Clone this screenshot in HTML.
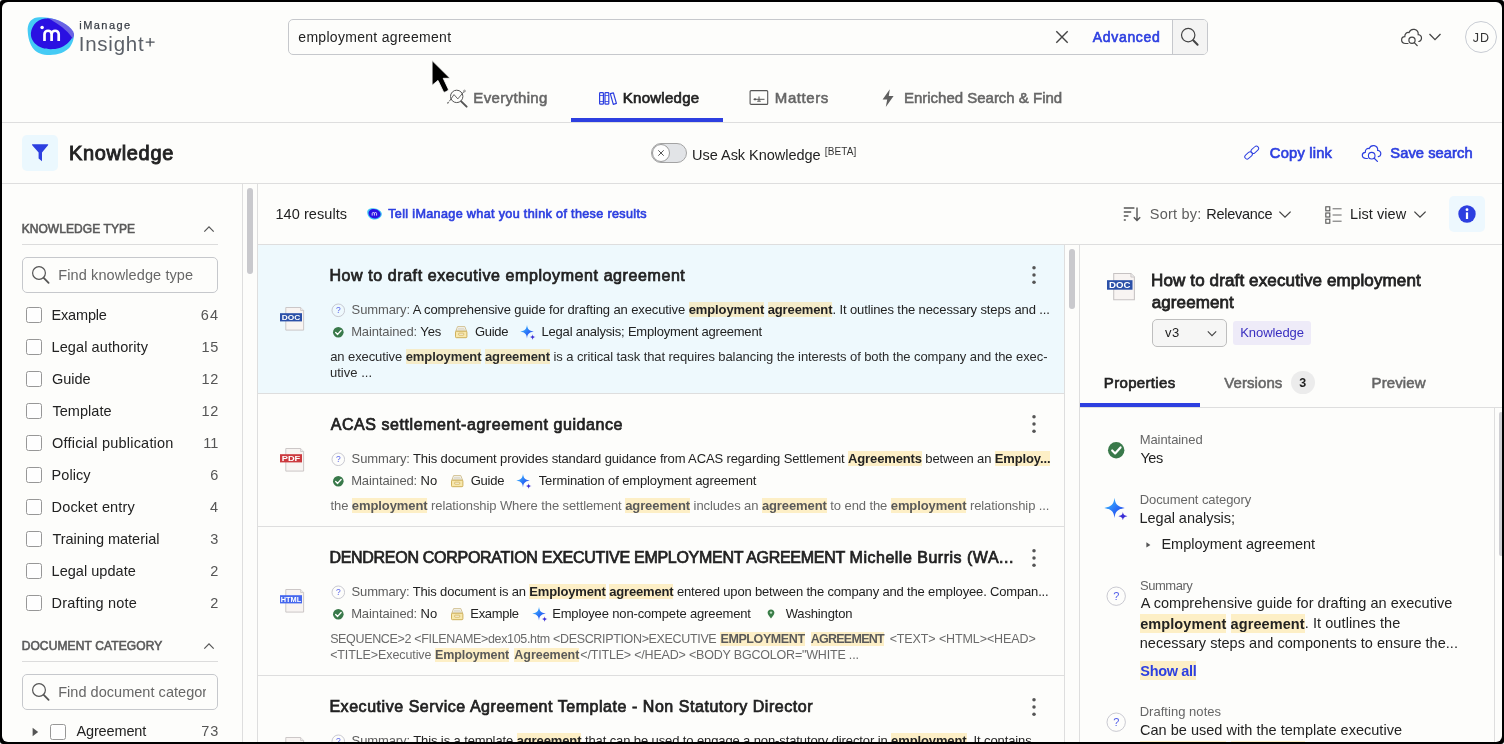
<!DOCTYPE html>
<html><head><meta charset="utf-8"><title>iManage Insight+</title>
<style>
html,body{margin:0;padding:0;background:#fff;}
#fr{position:absolute;left:0;top:0;width:1504px;height:744px;background:#000;border-radius:3px;}
body{width:1504px;height:744px;overflow:hidden;font-family:"Liberation Sans",sans-serif;}
#app{position:absolute;left:2px;top:2px;width:1500.3px;height:739.8px;background:#fdfdfb;border-radius:6px;overflow:hidden;}
#c{position:absolute;left:-2px;top:-2px;width:1504px;height:744px;will-change:transform;}
#c>div,#c>svg{position:absolute;box-sizing:border-box;}
.t{white-space:nowrap;}
.t b{font-weight:bold;}
.h{background:#fdefc6;}
.h2{background:#f5ecc9;}
.h3{background:#fdefc6;padding:1.5px 0;}
.g{color:#5d5d5d;}
.gl b{color:#595959;}
.d{color:#222;}
</style></head><body><div id="fr"></div><div id="app"><div id="c">
<svg style="left:26px;top:14px;" width="52" height="44" viewBox="26 14 52 44">
<path d="M27.7 31 C27.3 25 30 18.6 37 17.6 C41 17.1 46 17.4 50 18 C60 20 71 26 73.6 33.5 C74.6 37.5 73 42.5 70 47 C66 52 58 55 50 55 C42 55 37 53 34 49.5 C30 45 28 38 27.7 31Z" fill="#45cbf5"/>
<path d="M47 18.3 C55 17.6 69 24 73.2 31.5 C74.8 34.5 74 36.8 72.2 39 L47 20Z" fill="#6a62e4"/>
<path d="M31 36 C30 28 36 19.6 45 18.6 C48 18.3 49.5 18.8 51 19.8 C58 24 67 30 72 37.4 C70 42 65 46 59.5 48 C54 49.6 47 49.6 42.5 48 C36 45.6 32 41.5 31 36Z" fill="#2a10e2"/>
<circle cx="42.1" cy="27.4" r="1.75" fill="#fff"/>
<path d="M44.5 40.9 V34.3 a3.55 3.55 0 0 1 7.1 0 V40.9 M51.6 34.3 a3.55 3.55 0 0 1 7.1 0 V40.9" fill="none" stroke="#fff" stroke-width="2.7"/>
</svg>
<div class="t" style="left:79.28px;top:18px;font-size:11px;line-height:15px;letter-spacing:1.445px;color:#3a3f47;-webkit-text-stroke:0.25px #3a3f47;">iManage</div>
<div class="t" style="left:78.75px;top:29px;font-size:20.5px;line-height:29px;letter-spacing:0.750px;color:#5b6068;">Insight</div>
<svg style="left:144px;top:36px;" width="12" height="12" viewBox="0 0 12 12"><path d="M6.1 1.9 V10.4 M1.7 6.2 H10.6" stroke="#4b5058" stroke-width="1.3" fill="none"/></svg>
<div style="left:288px;top:19px;width:920px;height:36px;border:1px solid #c6c8cc;border-radius:5px;background:#fdfdfb;"></div>
<div style="left:1172px;top:20px;width:35px;height:34px;background:#f4f4f3;border-left:1px solid #c6c8cc;border-radius:0 4px 4px 0;"></div>
<div class="t" style="left:298.34px;top:27px;font-size:14px;line-height:20px;letter-spacing:0.296px;color:#222;">employment agreement</div>
<svg style="left:1054px;top:29px;" width="16" height="16" viewBox="0 0 16 16"><path d="M2.3 2.3 L13.7 13.7 M13.7 2.3 L2.3 13.7" stroke="#444" stroke-width="1.4" fill="none"/></svg>
<div class="t" style="left:1092.70px;top:27px;font-size:14px;line-height:20px;letter-spacing:0.698px;color:#2d3fe0;-webkit-text-stroke:0.63px #2d3fe0;">Advanced</div>
<svg style="left:1179px;top:27px;" width="22" height="22" viewBox="0 0 22 22"><circle cx="9.2" cy="8.1" r="6.7" fill="none" stroke="#444" stroke-width="1.2"/><path d="M14.2 13.2 L18.6 17.8" stroke="#444" stroke-width="2" stroke-linecap="round"/></svg>
<svg style="left:1398.8px;top:26.3px;" width="26" height="24" viewBox="0 0 26 24"><path d="M9 17.5 H6.6 C4 17.5 2.6 15.8 2.6 14 C2.6 12.2 4 10.8 5.8 10.7 C5.6 7.5 8 6 10 6.6 C11 4 13.3 3 15.4 3.4 C18 3.9 19.4 6 19.2 8.6 C21.6 8.7 22.6 10.6 22.5 12.3 C22.4 14 21.3 15.3 19.8 15.5" fill="none" stroke="#444" stroke-width="1.2" stroke-linecap="round"/>
<circle cx="13" cy="14.2" r="3.1" fill="none" stroke="#444" stroke-width="1.2"/><path d="M15.3 16.6 L18.2 19.6" stroke="#444" stroke-width="1.3" stroke-linecap="round"/></svg>
<svg style="left:1428px;top:31px;" width="14" height="12" viewBox="0 0 14 12"><path d="M1.5 3 L7 8.6 L12.5 3" fill="none" stroke="#444" stroke-width="1.3"/></svg>
<div style="left:1465px;top:21px;width:32px;height:32px;border:1px solid #c8ccd3;border-radius:50%;"></div>
<div class="t" style="left:1472.71px;top:29px;font-size:12.5px;line-height:18px;letter-spacing:1.100px;color:#333;">JD</div>
<svg style="left:428px;top:56px;" width="28" height="40" viewBox="428 56 28 40"><path d="M432.1 60.6 L432.1 85.3 L438 80.4 L443.3 91.4 Q444 92.6 445.2 92 L447.6 90.8 Q448.8 90.1 448.2 88.9 L443.2 78.3 L450 78.3 Z" fill="#000" stroke="#fdfdfb" stroke-width="0.8" stroke-linejoin="round"/></svg>
<svg style="left:445px;top:88px;" width="24" height="22" viewBox="445 88 24 22"><circle cx="456.7" cy="96.4" r="6.2" fill="none" stroke="#555" stroke-width="1"/>
<path d="M461.2 101.4 L466.6 106.6" stroke="#555" stroke-width="2" stroke-linecap="round"/>
<path d="M449.3 101.3 L454 94.6 L457.8 98.9 L464 91.6" fill="none" stroke="#555" stroke-width="0.9"/>
<path d="M447.3 103.4 L448.6 102.3" stroke="#555" stroke-width="1.2"/>
<circle cx="464.5" cy="91" r="0.9" fill="none" stroke="#555" stroke-width="0.6"/></svg>
<div class="t" style="left:473.30px;top:87px;font-size:15px;line-height:21px;letter-spacing:0.361px;color:#666;-webkit-text-stroke:0.55px #666;">Everything</div>
<svg style="left:598px;top:91px;" width="20" height="15" viewBox="0 0 20 15"><rect x="1.6" y="1.6" width="3.8" height="11.6" rx="0.8" fill="none" stroke="#2d3fe0" stroke-width="1.2"/>
<rect x="7" y="1.6" width="3.8" height="11.6" rx="0.8" fill="none" stroke="#2d3fe0" stroke-width="1.2"/>
<path d="M12.3 2.6 L15.4 1.8 L18.4 12.4 L15.3 13.3 Z" fill="none" stroke="#2d3fe0" stroke-width="1.2" stroke-linejoin="round"/>
<path d="M1.6 4.5 H5.4 M7 4.5 H10.8 M1.6 10.5 H5.4 M7 10.5 H10.8" stroke="#2d3fe0" stroke-width="0.8"/></svg>
<div class="t" style="left:622.80px;top:87px;font-size:15px;line-height:21px;letter-spacing:0.261px;color:#222;-webkit-text-stroke:0.67px #222;">Knowledge</div>
<div style="left:571px;top:118px;width:152px;height:4px;background:#2d3fe0;"></div>
<svg style="left:749px;top:89px;" width="20" height="17" viewBox="0 0 20 17"><rect x="1.1" y="1.6" width="17.6" height="13.8" rx="1" fill="none" stroke="#555" stroke-width="1.1"/>
<path d="M4.5 10.3 H15.5 M10 7.5 V12.2 M8.2 12.2 H11.8" stroke="#555" stroke-width="1" fill="none"/><circle cx="6" cy="10.3" r="1.1" fill="#555"/></svg>
<div class="t" style="left:774.80px;top:87px;font-size:15px;line-height:21px;letter-spacing:0.586px;color:#666;-webkit-text-stroke:0.55px #666;">Matters</div>
<svg style="left:880px;top:87.5px;" width="16" height="21" viewBox="0 0 16 21"><path d="M9.8 1.2 L2.6 11.6 H7.2 L5.8 19 L13.6 8 H8.8 Z" fill="#606060"/></svg>
<div class="t" style="left:904.00px;top:87px;font-size:15px;line-height:21px;letter-spacing:-0.014px;color:#666;-webkit-text-stroke:0.55px #666;">Enriched Search &amp; Find</div>
<div style="left:2px;top:122px;width:1500px;height:1px;background:#dedede;"></div>
<div style="left:22px;top:135px;width:36px;height:36px;background:#ebf8fe;border-radius:5px;"></div>
<svg style="left:30px;top:142px;" width="20" height="22" viewBox="0 0 20 22"><path d="M2.4 2.2 H17.8 Q18.6 2.3 18 3.2 L12 10.6 V19.2 L8.6 16.6 V10.6 L2.2 3.2 Q1.6 2.3 2.4 2.2Z" fill="#2d3fe0"/></svg>
<div class="t" style="left:68.90px;top:139px;font-size:20px;line-height:28px;letter-spacing:0.682px;color:#222;-webkit-text-stroke:0.9px #222;">Knowledge</div>
<div style="left:651px;top:143px;width:36px;height:20px;background:#e2e4e7;border:1px solid #a3a3a3;border-radius:10px;"></div>
<div style="left:652px;top:144px;width:18px;height:18px;background:#fefefe;border:1px solid #9c9c9c;border-radius:50%;"></div>
<svg style="left:656px;top:148px;" width="10" height="10" viewBox="0 0 10 10"><path d="M2.3 2.3 L7.7 7.7 M7.7 2.3 L2.3 7.7" stroke="#555" stroke-width="1" fill="none"/></svg>
<div class="t" style="left:692.11px;top:145px;font-size:14.5px;line-height:20px;letter-spacing:-0.030px;color:#222;">Use Ask Knowledge</div>
<div class="t" style="left:824.80px;top:145px;font-size:10px;line-height:14px;letter-spacing:0.089px;color:#333;">[BETA]</div>
<svg style="left:1242px;top:144px;" width="20" height="18" viewBox="0 0 20 18"><g fill="none" stroke="#2d3fe0" stroke-width="0.95" transform="rotate(-42 9.7 8.6)"><rect x="1.2" y="6.3" width="8.6" height="4.6" rx="2.3"/><rect x="9.6" y="6.3" width="8.6" height="4.6" rx="2.3"/></g></svg>
<div class="t" style="left:1269.87px;top:143px;font-size:14.7px;line-height:21px;letter-spacing:0.200px;color:#2d3fe0;-webkit-text-stroke:0.66px #2d3fe0;">Copy link</div>
<svg style="left:1360px;top:143px;" width="25" height="21" viewBox="0 0 25 21"><path d="M7.4 15.5 H6 C3.6 15.5 2.3 14 2.3 12.3 C2.3 10.7 3.6 9.4 5.3 9.3 C5.1 6.4 7.3 5 9.2 5.6 C10.1 3.2 12.2 2.3 14.2 2.6 C16.6 3.1 17.9 5 17.7 7.4 C19.9 7.5 20.9 9.2 20.8 10.8 C20.7 12.3 19.7 13.5 18.3 13.7" fill="none" stroke="#2d3fe0" stroke-width="1.2" stroke-linecap="round"/>
<circle cx="11.7" cy="12.7" r="3.3" fill="none" stroke="#2d3fe0" stroke-width="1.1"/><path d="M14.2 15.2 L17.4 18.4" stroke="#2d3fe0" stroke-width="1.3" stroke-linecap="round"/></svg>
<div class="t" style="left:1390.34px;top:143px;font-size:14.7px;line-height:21px;letter-spacing:0.065px;color:#2d3fe0;-webkit-text-stroke:0.66px #2d3fe0;">Save search</div>
<div style="left:2px;top:183px;width:1500px;height:1px;background:#dedede;"></div>
<div style="left:242px;top:184px;width:1px;height:560px;background:#dedede;"></div>
<div style="left:246.5px;top:188px;width:6.5px;height:86px;background:#c9c9cd;border-radius:3px;"></div>
<div style="left:257px;top:184px;width:1px;height:560px;background:#dedede;"></div>
<div class="t" style="left:21.64px;top:221px;font-size:12px;line-height:17px;letter-spacing:0.076px;color:#5a5a5a;-webkit-text-stroke:0.6px #5a5a5a;">KNOWLEDGE TYPE</div>
<svg style="left:203px;top:224.5px;" width="12" height="8" viewBox="0 0 12 8"><path d="M1.3 6.6 L6 1.8 L10.7 6.6" fill="none" stroke="#555" stroke-width="1.2"/></svg>
<div style="left:22px;top:244px;width:196px;height:1px;background:#dcdcdc;"></div>
<div style="left:22px;top:257px;width:196px;height:36px;border:1px solid #c6c8cc;border-radius:5px;"></div>
<svg style="left:31px;top:265px;" width="20" height="20" viewBox="0 0 20 20"><circle cx="8" cy="8" r="6.4" fill="none" stroke="#555" stroke-width="1.2"/><path d="M12.7 12.8 L17.6 17.8" stroke="#555" stroke-width="1.8" stroke-linecap="round"/></svg>
<div class="t" style="left:58.34px;top:265px;font-size:14.5px;line-height:20px;letter-spacing:0.097px;color:#676767;">Find knowledge type</div>
<div style="left:26px;top:307px;width:16px;height:16px;border:1px solid #979797;border-radius:2.5px;background:#fefefe;"></div>
<div class="t" style="left:51.54px;top:305px;font-size:14.5px;line-height:20px;letter-spacing:-0.177px;color:#222;">Example</div>
<div class="t" style="left:200.85px;top:305px;font-size:14.5px;line-height:20px;letter-spacing:1.100px;color:#555;">64</div>
<div style="left:26px;top:339px;width:16px;height:16px;border:1px solid #979797;border-radius:2.5px;background:#fefefe;"></div>
<div class="t" style="left:51.54px;top:337px;font-size:14.5px;line-height:20px;letter-spacing:0.095px;color:#222;">Legal authority</div>
<div class="t" style="left:201.41px;top:337px;font-size:14.5px;line-height:20px;letter-spacing:0.756px;color:#555;">15</div>
<div style="left:26px;top:371px;width:16px;height:16px;border:1px solid #979797;border-radius:2.5px;background:#fefefe;"></div>
<div class="t" style="left:51.98px;top:369px;font-size:14.5px;line-height:20px;letter-spacing:-0.018px;color:#222;">Guide</div>
<div class="t" style="left:201.41px;top:369px;font-size:14.5px;line-height:20px;letter-spacing:0.828px;color:#555;">12</div>
<div style="left:26px;top:403px;width:16px;height:16px;border:1px solid #979797;border-radius:2.5px;background:#fefefe;"></div>
<div class="t" style="left:52.41px;top:401px;font-size:14.5px;line-height:20px;letter-spacing:0.050px;color:#222;">Template</div>
<div class="t" style="left:201.41px;top:401px;font-size:14.5px;line-height:20px;letter-spacing:0.828px;color:#555;">12</div>
<div style="left:26px;top:435px;width:16px;height:16px;border:1px solid #979797;border-radius:2.5px;background:#fefefe;"></div>
<div class="t" style="left:52.05px;top:433px;font-size:14.5px;line-height:20px;letter-spacing:0.207px;color:#222;">Official publication</div>
<div class="t" style="left:203.32px;top:433px;font-size:14.5px;line-height:20px;letter-spacing:0.000px;color:#555;">11</div>
<div style="left:26px;top:467px;width:16px;height:16px;border:1px solid #979797;border-radius:2.5px;background:#fefefe;"></div>
<div class="t" style="left:51.54px;top:465px;font-size:14.5px;line-height:20px;letter-spacing:0.056px;color:#222;">Policy</div>
<div class="t" style="left:210.23px;top:465px;font-size:14.5px;line-height:20px;letter-spacing:0.000px;color:#555;">6</div>
<div style="left:26px;top:499px;width:16px;height:16px;border:1px solid #979797;border-radius:2.5px;background:#fefefe;"></div>
<div class="t" style="left:51.54px;top:497px;font-size:14.5px;line-height:20px;letter-spacing:0.170px;color:#222;">Docket entry</div>
<div class="t" style="left:210.01px;top:497px;font-size:14.5px;line-height:20px;letter-spacing:0.000px;color:#555;">4</div>
<div style="left:26px;top:531px;width:16px;height:16px;border:1px solid #979797;border-radius:2.5px;background:#fefefe;"></div>
<div class="t" style="left:52.41px;top:529px;font-size:14.5px;line-height:20px;letter-spacing:-0.029px;color:#222;">Training material</div>
<div class="t" style="left:210.23px;top:529px;font-size:14.5px;line-height:20px;letter-spacing:0.000px;color:#555;">3</div>
<div style="left:26px;top:563px;width:16px;height:16px;border:1px solid #979797;border-radius:2.5px;background:#fefefe;"></div>
<div class="t" style="left:51.54px;top:561px;font-size:14.5px;line-height:20px;letter-spacing:0.036px;color:#222;">Legal update</div>
<div class="t" style="left:210.30px;top:561px;font-size:14.5px;line-height:20px;letter-spacing:0.000px;color:#555;">2</div>
<div style="left:26px;top:595px;width:16px;height:16px;border:1px solid #979797;border-radius:2.5px;background:#fefefe;"></div>
<div class="t" style="left:51.54px;top:593px;font-size:14.5px;line-height:20px;letter-spacing:0.195px;color:#222;">Drafting note</div>
<div class="t" style="left:210.30px;top:593px;font-size:14.5px;line-height:20px;letter-spacing:0.000px;color:#555;">2</div>
<div class="t" style="left:21.64px;top:638px;font-size:12px;line-height:17px;letter-spacing:0.121px;color:#5a5a5a;-webkit-text-stroke:0.6px #5a5a5a;">DOCUMENT CATEGORY</div>
<svg style="left:203px;top:642px;" width="12" height="8" viewBox="0 0 12 8"><path d="M1.3 6.6 L6 1.8 L10.7 6.6" fill="none" stroke="#555" stroke-width="1.2"/></svg>
<div style="left:22px;top:661px;width:196px;height:1px;background:#dcdcdc;"></div>
<div style="left:22px;top:674px;width:196px;height:36px;border:1px solid #c6c8cc;border-radius:5px;"></div>
<svg style="left:31px;top:682px;" width="20" height="20" viewBox="0 0 20 20"><circle cx="8" cy="8" r="6.4" fill="none" stroke="#555" stroke-width="1.2"/><path d="M12.7 12.8 L17.6 17.8" stroke="#555" stroke-width="1.8" stroke-linecap="round"/></svg>
<div class="t" style="left:58.14px;top:682px;font-size:14.5px;line-height:20px;letter-spacing:0.038px;color:#676767;width:148px;overflow:hidden;">Find document category</div>
<svg style="left:31px;top:726px;" width="9" height="12" viewBox="0 0 9 12"><path d="M1.6 1.8 L7.2 6 L1.6 10.2Z" fill="#555"/></svg>
<div style="left:50px;top:724px;width:16px;height:16px;border:1px solid #979797;border-radius:2.5px;background:#fefefe;"></div>
<div class="t" style="left:76.40px;top:721px;font-size:14.5px;line-height:20px;letter-spacing:-0.124px;color:#222;">Agreement</div>
<div class="t" style="left:201.28px;top:721px;font-size:14.5px;line-height:20px;letter-spacing:0.893px;color:#555;">73</div>
<div class="t" style="left:275.51px;top:204px;font-size:14.5px;line-height:20px;letter-spacing:0.057px;color:#222;">140 results</div>
<svg style="left:366px;top:207px;" width="17" height="14" viewBox="0 0 17 14"><path d="M1.2 5 C1.2 2.3 4 1 7.5 1.2 C11.5 1.4 15.3 3.6 15.8 6.6 C16.2 9.6 13 12.4 9 12.6 C5 12.8 1.4 10 1.2 5Z" fill="#3ec6f4"/>
<path d="M2.6 6.6 C2.3 3.6 5 1.8 8 2 C11.4 2.2 14.6 4.6 14.6 7.2 C14.6 9.8 11.6 11.4 8.6 11.4 C5.4 11.4 2.9 9.6 2.6 6.6Z" fill="#2a12e4"/>
<path d="M6.2 8.6 V6.6 a1.1 1.1 0 0 1 2.2 0 V8.6 M8.4 6.6 a1.1 1.1 0 0 1 2.2 0 V8.6" fill="none" stroke="#fff" stroke-width="0.8"/></svg>
<div class="t" style="left:388.15px;top:205px;font-size:12.6px;line-height:18px;letter-spacing:0.346px;color:#2d3fe0;-webkit-text-stroke:0.65px #2d3fe0;">Tell iManage what you think of these results</div>
<svg style="left:1122px;top:205px;" width="20" height="18" viewBox="0 0 20 18"><path d="M1.8 3 H12.4 M1.8 7 H9.2 M1.8 11 H6.4 M1.8 15 H3.8" stroke="#555" stroke-width="1.5" fill="none"/>
<path d="M15 2.4 V15.4 M11.8 12.2 L15 15.6 L18.2 12.2" stroke="#555" stroke-width="1.4" fill="none"/></svg>
<div class="t" style="left:1149.85px;top:204px;font-size:14.5px;line-height:20px;letter-spacing:0.209px;color:#5d5d5d;">Sort by:</div>
<div class="t" style="left:1206.24px;top:204px;font-size:14.5px;line-height:20px;letter-spacing:-0.270px;color:#222;">Relevance</div>
<svg style="left:1278px;top:210px;" width="14" height="9" viewBox="0 0 14 9"><path d="M1.4 1.6 L7 7.2 L12.6 1.6" fill="none" stroke="#444" stroke-width="1.3"/></svg>
<svg style="left:1323.7px;top:204.6px;" width="20" height="20" viewBox="0 0 20 20"><rect x="1.8" y="1.8" width="4" height="4" fill="none" stroke="#555" stroke-width="1.1"/><rect x="1.8" y="8" width="4" height="4" fill="none" stroke="#555" stroke-width="1.1"/><rect x="1.8" y="14.2" width="4" height="4" fill="none" stroke="#555" stroke-width="1.1"/>
<path d="M8.6 3.8 H17.6 M8.6 10 H17.6 M8.6 16.2 H17.6" stroke="#666" stroke-width="1"/></svg>
<div class="t" style="left:1350.04px;top:204px;font-size:14.5px;line-height:20px;letter-spacing:0.068px;color:#222;">List view</div>
<svg style="left:1412.5px;top:210px;" width="14" height="9" viewBox="0 0 14 9"><path d="M1.4 1.6 L7 7.2 L12.6 1.6" fill="none" stroke="#444" stroke-width="1.3"/></svg>
<div style="left:1449px;top:196px;width:36px;height:36px;background:#edf8fe;border-radius:5px;"></div>
<svg style="left:1457px;top:204px;" width="20" height="20" viewBox="0 0 20 20"><circle cx="10" cy="10" r="8.7" fill="#2d3fe0"/><rect x="8.9" y="8.4" width="2.2" height="6.6" fill="#fff"/><circle cx="10" cy="5.7" r="1.4" fill="#fff"/></svg>
<div style="left:258px;top:244px;width:1244px;height:1px;background:#dedede;"></div>
<div style="left:258px;top:245px;width:806px;height:148px;background:#eef9fd;"></div>
<div style="left:258px;top:393px;width:806px;height:1px;background:#dedede;"></div>
<div style="left:258px;top:526px;width:806px;height:1px;background:#dedede;"></div>
<div style="left:258px;top:675px;width:806px;height:1px;background:#dedede;"></div>
<div style="left:1064px;top:245px;width:1px;height:500px;background:#dedede;"></div>
<div style="left:1068.5px;top:248.5px;width:6.5px;height:60px;background:#c9c9cd;border-radius:3px;"></div>
<div style="left:1079px;top:245px;width:1px;height:500px;background:#dedede;"></div>
<div class="t" style="left:329.42px;top:265px;font-size:16px;line-height:22px;letter-spacing:0.585px;color:#222;-webkit-text-stroke:0.72px #222;">How to draft executive employment agreement</div>
<svg style="left:1031.2px;top:265.2px;" width="6" height="20" viewBox="0 0 6 20"><circle cx="3" cy="2.7" r="1.75" fill="#555"/><circle cx="3" cy="10" r="1.75" fill="#555"/><circle cx="3" cy="17.3" r="1.75" fill="#555"/></svg>
<svg style="left:280px;top:306.8px;" width="25" height="25" viewBox="0 0 25 25"><path d="M5.8 0.5 H20.6 L23.6 3.5 V23.1 H5.8 Z" fill="#f8f4f2" stroke="#c6c2c2" stroke-width="0.9"/>
<path d="M20.6 0.5 V3.5 H23.6" fill="#ecebeb" stroke="#c6c2c2" stroke-width="0.7"/>
<rect x="0" y="6.2" width="22" height="8.2" fill="#2b50a8"/>
<text x="11" y="13.1" font-family="Liberation Sans, sans-serif" font-weight="bold" font-size="7.6" fill="#fff" text-anchor="middle" textLength="18.5" lengthAdjust="spacingAndGlyphs">DOC</text></svg>
<svg style="left:330.5px;top:303.0px;" width="14.6" height="14.6" viewBox="0 0 14.6 14.6"><circle cx="7.3" cy="7.3" r="6.3" fill="none" stroke="#bdbdc6" stroke-width="0.8"/><text x="7.3" y="10.36" font-family="Liberation Sans, sans-serif" font-size="8.5" fill="#5561ea" text-anchor="middle">?</text></svg>
<div class="t" style="left:351.62px;top:301px;font-size:13px;line-height:18px;letter-spacing:-0.109px;color:#222;"><span class="g">Summary:</span> A comprehensive guide for drafting an executive <b class="h2">employment</b> <b class="h2">agreement</b>. It outlines the necessary steps and ...</div>
<svg style="left:331.7px;top:325.9px;" width="12.6" height="12.6" viewBox="0 0 12.6 12.6"><circle cx="6.3" cy="6.3" r="5.3" fill="#39794a"/><path d="M3.6999999999999997 6.5 L5.6 8.4 L9.1 4.5" fill="none" stroke="#fff" stroke-width="1.40" stroke-linecap="round" stroke-linejoin="round"/></svg>
<div class="t" style="left:351.16px;top:323px;font-size:13px;line-height:18px;letter-spacing:-0.122px;color:#222;"><span class="g">Maintained:</span> Yes</div>
<svg style="left:454.8px;top:325.8px;" width="13" height="13" viewBox="0 0 13 13"><path d="M2.6 0.6 H9.8 L11.6 5.2 H0.8Z" fill="#fdfdf8" stroke="#c7b27a" stroke-width="0.8" stroke-linejoin="round"/>
<path d="M3 2.3 H9.4 M2.3 3.8 H10.1" stroke="#c9c3b0" stroke-width="0.7"/>
<rect x="0.5" y="5.2" width="11.4" height="6.5" rx="0.9" fill="#f8e8ad" stroke="#cba94e" stroke-width="0.9"/>
<rect x="3.7" y="7.2" width="5" height="2" rx="0.4" fill="#fdf8e4" stroke="#cba94e" stroke-width="0.7"/></svg>
<div class="t" style="left:474.95px;top:323px;font-size:13px;line-height:18px;letter-spacing:-0.276px;color:#222;">Guide</div>
<svg style="left:520.3px;top:324.6px;" width="16.0" height="15.0" viewBox="0 0 16 15"><defs><linearGradient id="sg1" x1="0" y1="0" x2="1" y2="1"><stop offset="0.15" stop-color="#38b6ff"/><stop offset="0.6" stop-color="#2a6af5"/><stop offset="1" stop-color="#2a3fe6"/></linearGradient></defs>
<path d="M7 -0.2 C7.5 4 8.8 5.7 13.8 6.6 C8.8 7.5 7.5 9.2 7 13.4 C6.5 9.2 5.2 7.5 0.2 6.6 C5.2 5.7 6.5 4 7 -0.2Z" fill="url(#sg1)"/>
<path d="M12.6 9.2 C12.8 11 13.4 11.7 15.6 12.1 C13.4 12.5 12.8 13.2 12.6 15 C12.4 13.2 11.8 12.5 9.6 12.1 C11.8 11.7 12.4 11 12.6 9.2Z" fill="#3b2ed6"/></svg>
<div class="t" style="left:541.56px;top:323px;font-size:13px;line-height:18px;letter-spacing:-0.204px;color:#222;">Legal analysis; Employment agreement</div>
<div class="t" style="left:330.18px;top:348px;font-size:13px;line-height:18px;letter-spacing:-0.084px;color:#2b2b2b;">an executive <b class="h2">employment</b> <b class="h2">agreement</b> is a critical task that requires balancing the interests of both the company and the exec-</div>
<div class="t" style="left:329.92px;top:364px;font-size:13px;line-height:18px;letter-spacing:0.039px;color:#2b2b2b;">utive ...</div>
<div class="t" style="left:330.70px;top:414px;font-size:16px;line-height:22px;letter-spacing:0.567px;color:#222;-webkit-text-stroke:0.72px #222;">ACAS settlement-agreement guidance</div>
<svg style="left:1031.2px;top:414.4px;" width="6" height="20" viewBox="0 0 6 20"><circle cx="3" cy="2.7" r="1.75" fill="#555"/><circle cx="3" cy="10" r="1.75" fill="#555"/><circle cx="3" cy="17.3" r="1.75" fill="#555"/></svg>
<svg style="left:280px;top:447.8px;" width="25" height="25" viewBox="0 0 25 25"><path d="M5.8 0.5 H20.6 L23.6 3.5 V23.1 H5.8 Z" fill="#f8f4f2" stroke="#c6c2c2" stroke-width="0.9"/>
<path d="M20.6 0.5 V3.5 H23.6" fill="#ecebeb" stroke="#c6c2c2" stroke-width="0.7"/>
<rect x="0" y="6.2" width="22" height="8.2" fill="#cc3a3f"/>
<text x="11" y="13.1" font-family="Liberation Sans, sans-serif" font-weight="bold" font-size="7.6" fill="#fff" text-anchor="middle" textLength="18.5" lengthAdjust="spacingAndGlyphs">PDF</text></svg>
<svg style="left:330.5px;top:451.9px;" width="14.6" height="14.6" viewBox="0 0 14.6 14.6"><circle cx="7.3" cy="7.3" r="6.3" fill="none" stroke="#bdbdc6" stroke-width="0.8"/><text x="7.3" y="10.36" font-family="Liberation Sans, sans-serif" font-size="8.5" fill="#5561ea" text-anchor="middle">?</text></svg>
<div class="t" style="left:351.62px;top:450px;font-size:13px;line-height:18px;letter-spacing:-0.131px;color:#222;"><span class="g">Summary:</span> This document provides standard guidance from ACAS regarding Settlement <b class="h">Agreements</b> between an <b class="h">Employ...</b></div>
<svg style="left:331.7px;top:474.9px;" width="12.6" height="12.6" viewBox="0 0 12.6 12.6"><circle cx="6.3" cy="6.3" r="5.3" fill="#39794a"/><path d="M3.6999999999999997 6.5 L5.6 8.4 L9.1 4.5" fill="none" stroke="#fff" stroke-width="1.40" stroke-linecap="round" stroke-linejoin="round"/></svg>
<div class="t" style="left:351.16px;top:472px;font-size:13px;line-height:18px;letter-spacing:-0.113px;color:#222;"><span class="g">Maintained:</span> No</div>
<svg style="left:450.6px;top:474.8px;" width="13" height="13" viewBox="0 0 13 13"><path d="M2.6 0.6 H9.8 L11.6 5.2 H0.8Z" fill="#fdfdf8" stroke="#c7b27a" stroke-width="0.8" stroke-linejoin="round"/>
<path d="M3 2.3 H9.4 M2.3 3.8 H10.1" stroke="#c9c3b0" stroke-width="0.7"/>
<rect x="0.5" y="5.2" width="11.4" height="6.5" rx="0.9" fill="#f8e8ad" stroke="#cba94e" stroke-width="0.9"/>
<rect x="3.7" y="7.2" width="5" height="2" rx="0.4" fill="#fdf8e4" stroke="#cba94e" stroke-width="0.7"/></svg>
<div class="t" style="left:470.75px;top:472px;font-size:13px;line-height:18px;letter-spacing:-0.251px;color:#222;">Guide</div>
<svg style="left:516px;top:473.6px;" width="16.0" height="15.0" viewBox="0 0 16 15"><defs><linearGradient id="sg2" x1="0" y1="0" x2="1" y2="1"><stop offset="0.15" stop-color="#38b6ff"/><stop offset="0.6" stop-color="#2a6af5"/><stop offset="1" stop-color="#2a3fe6"/></linearGradient></defs>
<path d="M7 -0.2 C7.5 4 8.8 5.7 13.8 6.6 C8.8 7.5 7.5 9.2 7 13.4 C6.5 9.2 5.2 7.5 0.2 6.6 C5.2 5.7 6.5 4 7 -0.2Z" fill="url(#sg2)"/>
<path d="M12.6 9.2 C12.8 11 13.4 11.7 15.6 12.1 C13.4 12.5 12.8 13.2 12.6 15 C12.4 13.2 11.8 12.5 9.6 12.1 C11.8 11.7 12.4 11 12.6 9.2Z" fill="#3b2ed6"/></svg>
<div class="t" style="left:538.74px;top:472px;font-size:13px;line-height:18px;letter-spacing:-0.122px;color:#222;">Termination of employment agreement</div>
<div class="t gl" style="left:330.50px;top:497px;font-size:13px;line-height:18px;letter-spacing:-0.092px;color:#6a6a6a;">the <b class="h">employment</b> relationship Where the settlement <b class="h">agreement</b> includes an <b class="h">agreement</b> to end the <b class="h">employment</b> relationship ...</div>
<div class="t" style="left:329.42px;top:547px;font-size:16px;line-height:22px;letter-spacing:-0.287px;color:#222;-webkit-text-stroke:0.72px #222;">DENDREON CORPORATION EXECUTIVE EMPLOYMENT AGREEMENT</div>
<div class="t" style="left:849.62px;top:547px;font-size:16px;line-height:22px;letter-spacing:0.504px;color:#222;-webkit-text-stroke:0.72px #222;">Michelle Burris (WA...</div>
<svg style="left:1031.2px;top:547.7px;" width="6" height="20" viewBox="0 0 6 20"><circle cx="3" cy="2.7" r="1.75" fill="#555"/><circle cx="3" cy="10" r="1.75" fill="#555"/><circle cx="3" cy="17.3" r="1.75" fill="#555"/></svg>
<svg style="left:280px;top:588.7px;" width="25" height="25" viewBox="0 0 25 25"><path d="M5.8 0.5 H20.6 L23.6 3.5 V23.1 H5.8 Z" fill="#f8f4f2" stroke="#c6c2c2" stroke-width="0.9"/>
<path d="M20.6 0.5 V3.5 H23.6" fill="#ecebeb" stroke="#c6c2c2" stroke-width="0.7"/>
<rect x="0" y="6.2" width="22" height="8.2" fill="#4567ee"/>
<text x="11" y="13.1" font-family="Liberation Sans, sans-serif" font-weight="bold" font-size="6.6" fill="#fff" text-anchor="middle" textLength="20.5" lengthAdjust="spacingAndGlyphs">HTML</text></svg>
<svg style="left:330.5px;top:584.9000000000001px;" width="14.6" height="14.6" viewBox="0 0 14.6 14.6"><circle cx="7.3" cy="7.3" r="6.3" fill="none" stroke="#bdbdc6" stroke-width="0.8"/><text x="7.3" y="10.36" font-family="Liberation Sans, sans-serif" font-size="8.5" fill="#5561ea" text-anchor="middle">?</text></svg>
<div class="t" style="left:351.62px;top:583px;font-size:13px;line-height:18px;letter-spacing:-0.166px;color:#222;"><span class="g">Summary:</span> This document is an <b class="h">Employment</b> <b class="h">agreement</b> entered upon between the company and the employee. Compan...</div>
<svg style="left:331.7px;top:608.2px;" width="12.6" height="12.6" viewBox="0 0 12.6 12.6"><circle cx="6.3" cy="6.3" r="5.3" fill="#39794a"/><path d="M3.6999999999999997 6.5 L5.6 8.4 L9.1 4.5" fill="none" stroke="#fff" stroke-width="1.40" stroke-linecap="round" stroke-linejoin="round"/></svg>
<div class="t" style="left:351.16px;top:605px;font-size:13px;line-height:18px;letter-spacing:-0.113px;color:#222;"><span class="g">Maintained:</span> No</div>
<svg style="left:450.6px;top:608.1px;" width="13" height="13" viewBox="0 0 13 13"><path d="M2.6 0.6 H9.8 L11.6 5.2 H0.8Z" fill="#fdfdf8" stroke="#c7b27a" stroke-width="0.8" stroke-linejoin="round"/>
<path d="M3 2.3 H9.4 M2.3 3.8 H10.1" stroke="#c9c3b0" stroke-width="0.7"/>
<rect x="0.5" y="5.2" width="11.4" height="6.5" rx="0.9" fill="#f8e8ad" stroke="#cba94e" stroke-width="0.9"/>
<rect x="3.7" y="7.2" width="5" height="2" rx="0.4" fill="#fdf8e4" stroke="#cba94e" stroke-width="0.7"/></svg>
<div class="t" style="left:470.36px;top:605px;font-size:13px;line-height:18px;letter-spacing:-0.334px;color:#222;">Example</div>
<svg style="left:531.5px;top:606.9px;" width="16.0" height="15.0" viewBox="0 0 16 15"><defs><linearGradient id="sg3" x1="0" y1="0" x2="1" y2="1"><stop offset="0.15" stop-color="#38b6ff"/><stop offset="0.6" stop-color="#2a6af5"/><stop offset="1" stop-color="#2a3fe6"/></linearGradient></defs>
<path d="M7 -0.2 C7.5 4 8.8 5.7 13.8 6.6 C8.8 7.5 7.5 9.2 7 13.4 C6.5 9.2 5.2 7.5 0.2 6.6 C5.2 5.7 6.5 4 7 -0.2Z" fill="url(#sg3)"/>
<path d="M12.6 9.2 C12.8 11 13.4 11.7 15.6 12.1 C13.4 12.5 12.8 13.2 12.6 15 C12.4 13.2 11.8 12.5 9.6 12.1 C11.8 11.7 12.4 11 12.6 9.2Z" fill="#3b2ed6"/></svg>
<div class="t" style="left:552.16px;top:605px;font-size:13px;line-height:18px;letter-spacing:-0.148px;color:#222;">Employee non-compete agreement</div>
<svg style="left:767.2px;top:608.8px;" width="8" height="10" viewBox="0 0 8 10"><path d="M4 0.4 C6 0.4 7.4 1.9 7.4 3.7 C7.4 5.8 5 7.6 4 9.6 C3 7.6 0.6 5.8 0.6 3.7 C0.6 1.9 2 0.4 4 0.4Z" fill="#3a7d48"/><circle cx="4" cy="3.6" r="1.2" fill="#bfe0c4"/></svg>
<div class="t" style="left:785.70px;top:605px;font-size:13px;line-height:18px;letter-spacing:-0.153px;color:#222;">Washington</div>
<div class="t gl" style="left:330.14px;top:630px;font-size:12.5px;line-height:18px;letter-spacing:-0.341px;color:#6a6a6a;">SEQUENCE&gt;2 &lt;FILENAME&gt;dex105.htm &lt;DESCRIPTION&gt;EXECUTIVE</div>
<div class="t gl" style="left:720.49px;top:630px;font-size:12.5px;line-height:18px;letter-spacing:-0.401px;color:#6a6a6a;"><b class="h">EMPLOYMENT</b></div>
<div class="t gl" style="left:810.69px;top:630px;font-size:12.5px;line-height:18px;letter-spacing:-0.735px;color:#6a6a6a;"><b class="h">AGREEMENT</b></div>
<div class="t gl" style="left:889.64px;top:630px;font-size:12.5px;line-height:18px;letter-spacing:-0.104px;color:#6a6a6a;">&lt;TEXT&gt; &lt;HTML&gt;&lt;HEAD&gt;</div>
<div class="t gl" style="left:330.14px;top:646px;font-size:12.5px;line-height:18px;letter-spacing:-0.103px;color:#6a6a6a;">&lt;TITLE&gt;Executive</div>
<div class="t gl" style="left:435.09px;top:646px;font-size:12.5px;line-height:18px;letter-spacing:-0.111px;color:#6a6a6a;"><b class="h">Employment</b></div>
<div class="t gl" style="left:514.29px;top:646px;font-size:12.5px;line-height:18px;letter-spacing:-0.023px;color:#6a6a6a;"><b class="h">Agreement</b></div>
<div class="t gl" style="left:580.34px;top:646px;font-size:12.5px;line-height:18px;letter-spacing:-0.192px;color:#6a6a6a;">&lt;/TITLE&gt; &lt;/HEAD&gt; &lt;BODY BGCOLOR=&quot;WHITE ...</div>
<div class="t" style="left:329.42px;top:696px;font-size:16px;line-height:22px;letter-spacing:0.542px;color:#222;-webkit-text-stroke:0.72px #222;">Executive Service Agreement Template - Non Statutory Director</div>
<svg style="left:1031.2px;top:696.8px;" width="6" height="20" viewBox="0 0 6 20"><circle cx="3" cy="2.7" r="1.75" fill="#555"/><circle cx="3" cy="10" r="1.75" fill="#555"/><circle cx="3" cy="17.3" r="1.75" fill="#555"/></svg>
<svg style="left:280px;top:736.8px;" width="25" height="25" viewBox="0 0 25 25"><path d="M5.8 0.5 H20.6 L23.6 3.5 V23.1 H5.8 Z" fill="#f8f4f2" stroke="#c6c2c2" stroke-width="0.9"/>
<path d="M20.6 0.5 V3.5 H23.6" fill="#ecebeb" stroke="#c6c2c2" stroke-width="0.7"/>
<rect x="0" y="6.2" width="22" height="8.2" fill="#2b50a8"/>
<text x="11" y="13.1" font-family="Liberation Sans, sans-serif" font-weight="bold" font-size="7.6" fill="#fff" text-anchor="middle" textLength="18.5" lengthAdjust="spacingAndGlyphs">DOC</text></svg>
<svg style="left:330.5px;top:733.9000000000001px;" width="14.6" height="14.6" viewBox="0 0 14.6 14.6"><circle cx="7.3" cy="7.3" r="6.3" fill="none" stroke="#bdbdc6" stroke-width="0.8"/><text x="7.3" y="10.36" font-family="Liberation Sans, sans-serif" font-size="8.5" fill="#5561ea" text-anchor="middle">?</text></svg>
<div class="t" style="left:351.62px;top:732px;font-size:13px;line-height:18px;letter-spacing:-0.110px;color:#222;"><span class="g">Summary:</span> This is a template <b class="h">agreement</b> that can be used to engage a non-statutory director in <b class="h">employment</b>. It contains...</div>
<svg style="left:1107.2px;top:272.8px;" width="29" height="29" viewBox="0 0 25 25"><path d="M5.8 0.5 H20.6 L23.6 3.5 V23.1 H5.8 Z" fill="#f8f4f2" stroke="#c6c2c2" stroke-width="0.9"/>
<path d="M20.6 0.5 V3.5 H23.6" fill="#ecebeb" stroke="#c6c2c2" stroke-width="0.7"/>
<rect x="0" y="6.2" width="22" height="8.2" fill="#2b50a8"/>
<text x="11" y="13.1" font-family="Liberation Sans, sans-serif" font-weight="bold" font-size="7.6" fill="#fff" text-anchor="middle" textLength="18.5" lengthAdjust="spacingAndGlyphs">DOC</text></svg>
<div class="t" style="left:1151.04px;top:269px;font-size:17px;line-height:24px;letter-spacing:0.131px;color:#222;-webkit-text-stroke:0.77px #222;">How to draft executive employment</div>
<div class="t" style="left:1151.72px;top:291px;font-size:17px;line-height:24px;letter-spacing:0.106px;color:#222;-webkit-text-stroke:0.77px #222;">agreement</div>
<div style="left:1152px;top:319px;width:75px;height:28px;border:1px solid #bebebe;border-radius:5px;background:#f6f6f5;"></div>
<div class="t" style="left:1165.00px;top:324px;font-size:13px;line-height:18px;letter-spacing:0.605px;color:#222;">v3</div>
<svg style="left:1206px;top:328.5px;" width="12" height="9" viewBox="0 0 12 9"><path d="M1.8 2.4 L6 6.6 L10.2 2.4" fill="none" stroke="#444" stroke-width="1.1"/></svg>
<div style="left:1233px;top:321px;width:78px;height:24px;background:#eeebf8;border-radius:3px;"></div>
<div class="t" style="left:1240.26px;top:324px;font-size:13px;line-height:18px;letter-spacing:-0.082px;color:#3a2fc0;">Knowledge</div>
<div class="t" style="left:1103.80px;top:372px;font-size:15px;line-height:21px;letter-spacing:0.340px;color:#222;-webkit-text-stroke:0.67px #222;">Properties</div>
<div style="left:1080px;top:403px;width:120px;height:4px;background:#2d3fe0;"></div>
<div style="left:1080px;top:407px;width:1422px;height:1px;background:#dedede;"></div>
<div class="t" style="left:1224.30px;top:372px;font-size:15px;line-height:21px;letter-spacing:0.070px;color:#666;-webkit-text-stroke:0.55px #666;">Versions</div>
<div style="left:1291.3px;top:371.1px;width:23.4px;height:23.4px;background:#ececec;border-radius:50%;"></div>
<div class="t" style="left:1299.15px;top:374px;font-size:12.5px;line-height:18px;letter-spacing:0.000px;color:#222;font-weight:bold;">3</div>
<div class="t" style="left:1371.50px;top:372px;font-size:15px;line-height:21px;letter-spacing:0.122px;color:#666;-webkit-text-stroke:0.55px #666;">Preview</div>
<div style="left:1494px;top:408px;width:1px;height:340px;background:#dedede;"></div>
<div style="left:1499.3px;top:412px;width:4px;height:144px;background:#cfcfd3;border-radius:2px;"></div>
<svg style="left:1106.8999999999999px;top:440.90000000000003px;" width="18.4" height="18.4" viewBox="0 0 18.4 18.4"><circle cx="9.2" cy="9.2" r="8.2" fill="#39794a"/><path d="M5.1773584905660375 9.50943396226415 L8.116981132075471 12.449056603773585 L13.53207547169811 6.415094339622641" fill="none" stroke="#fff" stroke-width="2.17" stroke-linecap="round" stroke-linejoin="round"/></svg>
<div class="t" style="left:1139.66px;top:431px;font-size:13px;line-height:18px;letter-spacing:-0.063px;color:#666;">Maintained</div>
<div class="t" style="left:1140.41px;top:448px;font-size:14.5px;line-height:20px;letter-spacing:-0.429px;color:#222;">Yes</div>
<svg style="left:1104.2px;top:497.6px;" width="24.0" height="22.5" viewBox="0 0 16 15"><defs><linearGradient id="sg4" x1="0" y1="0" x2="1" y2="1"><stop offset="0.15" stop-color="#38b6ff"/><stop offset="0.6" stop-color="#2a6af5"/><stop offset="1" stop-color="#2a3fe6"/></linearGradient></defs>
<path d="M7 -0.2 C7.5 4 8.8 5.7 13.8 6.6 C8.8 7.5 7.5 9.2 7 13.4 C6.5 9.2 5.2 7.5 0.2 6.6 C5.2 5.7 6.5 4 7 -0.2Z" fill="url(#sg4)"/>
<path d="M12.6 9.2 C12.8 11 13.4 11.7 15.6 12.1 C13.4 12.5 12.8 13.2 12.6 15 C12.4 13.2 11.8 12.5 9.6 12.1 C11.8 11.7 12.4 11 12.6 9.2Z" fill="#3b2ed6"/></svg>
<div class="t" style="left:1139.66px;top:491px;font-size:13px;line-height:18px;letter-spacing:-0.068px;color:#666;">Document category</div>
<div class="t" style="left:1139.54px;top:508px;font-size:14.5px;line-height:20px;letter-spacing:-0.028px;color:#222;">Legal analysis;</div>
<svg style="left:1144.8px;top:541px;" width="7" height="8" viewBox="0 0 7 8"><path d="M1.4 1.2 L5.4 3.9 L1.4 6.6Z" fill="#555"/></svg>
<div class="t" style="left:1161.44px;top:534px;font-size:14.5px;line-height:20px;letter-spacing:-0.013px;color:#222;">Employment agreement</div>
<svg style="left:1105.8999999999999px;top:586.0999999999999px;" width="20.4" height="20.4" viewBox="0 0 20.4 20.4"><circle cx="10.2" cy="10.2" r="9.2" fill="none" stroke="#bdbdc6" stroke-width="0.8"/><text x="10.2" y="14.16" font-family="Liberation Sans, sans-serif" font-size="11" fill="#5561ea" text-anchor="middle">?</text></svg>
<div class="t" style="left:1140.12px;top:577px;font-size:13px;line-height:18px;letter-spacing:-0.489px;color:#666;">Summary</div>
<div class="t" style="left:1140.70px;top:593px;font-size:14.5px;line-height:20px;letter-spacing:0.047px;color:#222;">A comprehensive guide for drafting an executive</div>
<div class="t" style="left:1140.19px;top:613px;font-size:14.5px;line-height:20px;letter-spacing:0.084px;color:#222;"><b class="h3">employment</b> <b class="h3">agreement</b>. It outlines the</div>
<div class="t" style="left:1139.76px;top:633px;font-size:14.5px;line-height:20px;letter-spacing:0.031px;color:#222;">necessary steps and components to ensure the...</div>
<div class="t" style="left:1140.34px;top:660px;font-size:14.5px;line-height:20px;letter-spacing:-0.338px;color:#2d3fe0;font-weight:bold;"><b class="h3">Show all</b></div>
<svg style="left:1105.8999999999999px;top:711.9px;" width="20.4" height="20.4" viewBox="0 0 20.4 20.4"><circle cx="10.2" cy="10.2" r="9.2" fill="none" stroke="#bdbdc6" stroke-width="0.8"/><text x="10.2" y="14.16" font-family="Liberation Sans, sans-serif" font-size="11" fill="#5561ea" text-anchor="middle">?</text></svg>
<div class="t" style="left:1139.66px;top:703px;font-size:13px;line-height:18px;letter-spacing:0.035px;color:#666;">Drafting notes</div>
<div class="t" style="left:1139.98px;top:720px;font-size:14.5px;line-height:20px;letter-spacing:0.023px;color:#222;">Can be used with the template executive</div>
<div class="t" style="left:1140.19px;top:740px;font-size:14.5px;line-height:20px;letter-spacing:0.084px;color:#222;"><b class="h3">employment</b> <b class="h3">agreement</b>. It outlines the</div>
</div></div></body></html>
